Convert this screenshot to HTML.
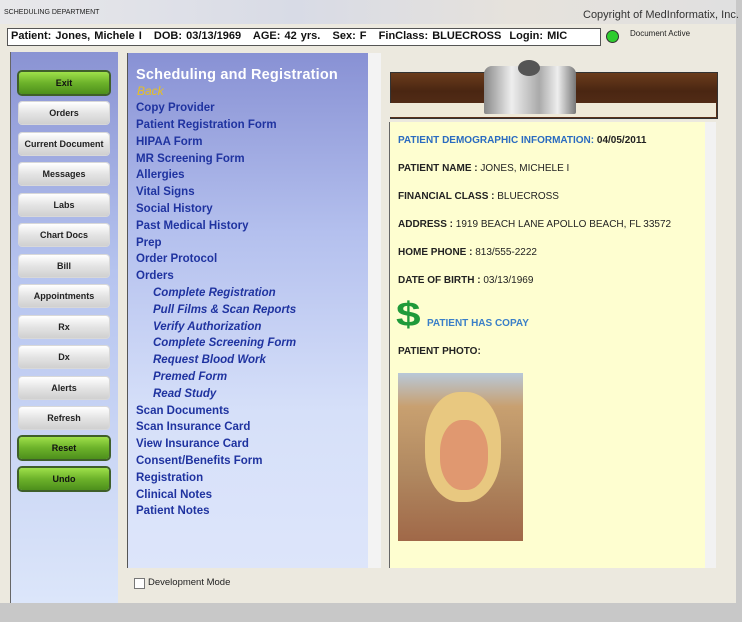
<!DOCTYPE html><html><head><style>
body{margin:0;width:742px;height:622px;background:#c8c8c8;font-family:"Liberation Sans",sans-serif;position:relative;overflow:hidden}
.a{position:absolute}
.btn{position:absolute;left:19px;width:90px;height:22px;border-radius:3px;font-size:9px;font-weight:bold;text-align:center;line-height:22px;color:#222;background:linear-gradient(#fff,#e4e4e4 50%,#d0d0d0);box-shadow:0 0 0 1px #d8d8d8}
.g{background:linear-gradient(#9fe04a,#6cb22a 50%,#4d8f1c);box-shadow:0 0 0 2px #3f5f2a;color:#111}
.l{position:absolute;left:136px;font-size:11.5px;font-weight:bold;color:#1f33a0}
.i{left:153px;font-style:italic}
.r{position:absolute;left:398px;font-size:10px;color:#222}
</style></head><body>
<div class="a" style="left:0;top:0;width:736px;height:603px;background:#ece9df"></div>
<div class="a" style="left:0;top:0;width:736px;height:24px;background:linear-gradient(90deg,#e8e8ea,#d8dbe6 40%,#e6e2dc 70%,#e0e0e0)"></div>
<div class="a" style="left:4px;top:9px;font-size:7px;color:#222">SCHEDULING DEPARTMENT</div>
<div class="a" style="left:583px;top:9px;font-size:11px;color:#333">Copyright of MedInformatix, Inc.</div>
<div class="a" style="left:7px;top:28px;width:592px;height:16px;background:#fff;border:1px solid #555"></div>
<div class="a" style="left:11px;top:30px;font-size:11px;font-weight:bold;color:#111;word-spacing:1px">Patient: Jones, Michele I&nbsp;&nbsp; DOB: 03/13/1969&nbsp;&nbsp; AGE: 42 yrs.&nbsp;&nbsp; Sex: F&nbsp;&nbsp; FinClass: BLUECROSS&nbsp; Login: MIC</div>
<div class="a" style="left:606px;top:30px;width:11px;height:11px;border-radius:50%;background:#2ecc2e;border:1px solid #333"></div>
<div class="a" style="left:630px;top:29px;font-size:8px;color:#222">Document Active</div>
<div class="a" style="left:10px;top:52px;width:107px;height:551px;background:linear-gradient(#8a93d3,#b6c4ef 40%,#dce6fa);border-left:1px solid #666"></div>
<div class="btn g" style="top:72px">Exit</div>
<div class="btn" style="top:102px">Orders</div>
<div class="btn" style="top:133px">Current Document</div>
<div class="btn" style="top:163px">Messages</div>
<div class="btn" style="top:194px">Labs</div>
<div class="btn" style="top:224px">Chart Docs</div>
<div class="btn" style="top:255px">Bill</div>
<div class="btn" style="top:285px">Appointments</div>
<div class="btn" style="top:316px">Rx</div>
<div class="btn" style="top:346px">Dx</div>
<div class="btn" style="top:377px">Alerts</div>
<div class="btn" style="top:407px">Refresh</div>
<div class="btn g" style="top:437px">Reset</div>
<div class="btn g" style="top:468px">Undo</div>
<div class="a" style="left:127px;top:53px;width:241px;height:515px;background:linear-gradient(#8891d4,#b4c0ee 35%,#d6e0f9 70%,#dde5fa);border-left:1px solid #555"></div>
<div class="a" style="left:368px;top:53px;width:13px;height:515px;background:#f3f3f3"></div>
<div class="a" style="left:136px;top:67px;font-size:14.5px;font-weight:bold;color:#fff;letter-spacing:0.2px">Scheduling and Registration</div>
<div class="a" style="left:137px;top:84px;font-size:12px;font-style:italic;color:#e8c020">Back</div>
<div class="l" style="top:102px">Copy Provider</div>
<div class="l" style="top:119px">Patient Registration Form</div>
<div class="l" style="top:136px">HIPAA Form</div>
<div class="l" style="top:153px">MR Screening Form</div>
<div class="l" style="top:169px">Allergies</div>
<div class="l" style="top:186px">Vital Signs</div>
<div class="l" style="top:203px">Social History</div>
<div class="l" style="top:220px">Past Medical History</div>
<div class="l" style="top:237px">Prep</div>
<div class="l" style="top:253px">Order Protocol</div>
<div class="l" style="top:270px">Orders</div>
<div class="l i" style="top:287px">Complete Registration</div>
<div class="l i" style="top:304px">Pull Films &amp; Scan Reports</div>
<div class="l i" style="top:321px">Verify Authorization</div>
<div class="l i" style="top:337px">Complete Screening Form</div>
<div class="l i" style="top:354px">Request Blood Work</div>
<div class="l i" style="top:371px">Premed Form</div>
<div class="l i" style="top:388px">Read Study</div>
<div class="l" style="top:405px">Scan Documents</div>
<div class="l" style="top:421px">Scan Insurance Card</div>
<div class="l" style="top:438px">View Insurance Card</div>
<div class="l" style="top:455px">Consent/Benefits Form</div>
<div class="l" style="top:472px">Registration</div>
<div class="l" style="top:489px">Clinical Notes</div>
<div class="l" style="top:505px">Patient Notes</div>
<div class="a" style="left:134px;top:578px;width:9px;height:9px;border:1px solid #777;background:#fff"></div>
<div class="a" style="left:148px;top:577px;font-size:9.5px;color:#222">Development Mode</div>
<div class="a" style="left:390px;top:72px;width:326px;height:45px;background:linear-gradient(#6b3c1c,#4a2612 40%,#5a311a);border:1px solid #333"></div>
<div class="a" style="left:390px;top:103px;width:326px;height:14px;background:#efe9d8"></div>
<div class="a" style="left:484px;top:66px;width:92px;height:48px;background:linear-gradient(90deg,#888,#eee 30%,#aaa 60%,#eee 80%,#777);border-radius:8px 8px 2px 2px"></div>
<div class="a" style="left:518px;top:60px;width:22px;height:16px;border-radius:50%;background:#555"></div>
<div class="a" style="left:389px;top:122px;width:316px;height:446px;background:#fefed0;border-left:1px solid #666"></div>
<div class="a" style="left:705px;top:122px;width:11px;height:446px;background:#f2f2f2"></div>
<div class="r" style="top:135px;font-weight:bold;color:#2a6bc0">PATIENT DEMOGRAPHIC INFORMATION: <span style="color:#222">04/05/2011</span></div>
<div class="r" style="top:163px"><b>PATIENT NAME :</b> JONES, MICHELE I</div>
<div class="r" style="top:191px"><b>FINANCIAL CLASS :</b> BLUECROSS</div>
<div class="r" style="top:219px"><b>ADDRESS :</b> 1919 BEACH LANE APOLLO BEACH, FL 33572</div>
<div class="r" style="top:247px"><b>HOME PHONE :</b> 813/555-2222</div>
<div class="r" style="top:275px"><b>DATE OF BIRTH :</b> 03/13/1969</div>
<div class="a" style="left:396px;top:298px;font-size:34px;font-weight:bold;color:#1f9a3a;line-height:34px;transform:scaleX(1.3);transform-origin:left">$</div>
<div class="r" style="left:427px;top:318px;font-weight:bold;color:#3a7fc8">PATIENT HAS COPAY</div>
<div class="r" style="top:346px;font-weight:bold">PATIENT PHOTO:</div>
<div class="a" style="left:398px;top:373px;width:125px;height:168px;background:linear-gradient(#b8c8d8,#c8a070 20%,#b08860 60%,#a06848)"></div>
<div class="a" style="left:425px;top:392px;width:76px;height:110px;border-radius:45%;background:#e8c880"></div>
<div class="a" style="left:440px;top:420px;width:48px;height:70px;border-radius:45%;background:#e09870"></div>
</body></html>
